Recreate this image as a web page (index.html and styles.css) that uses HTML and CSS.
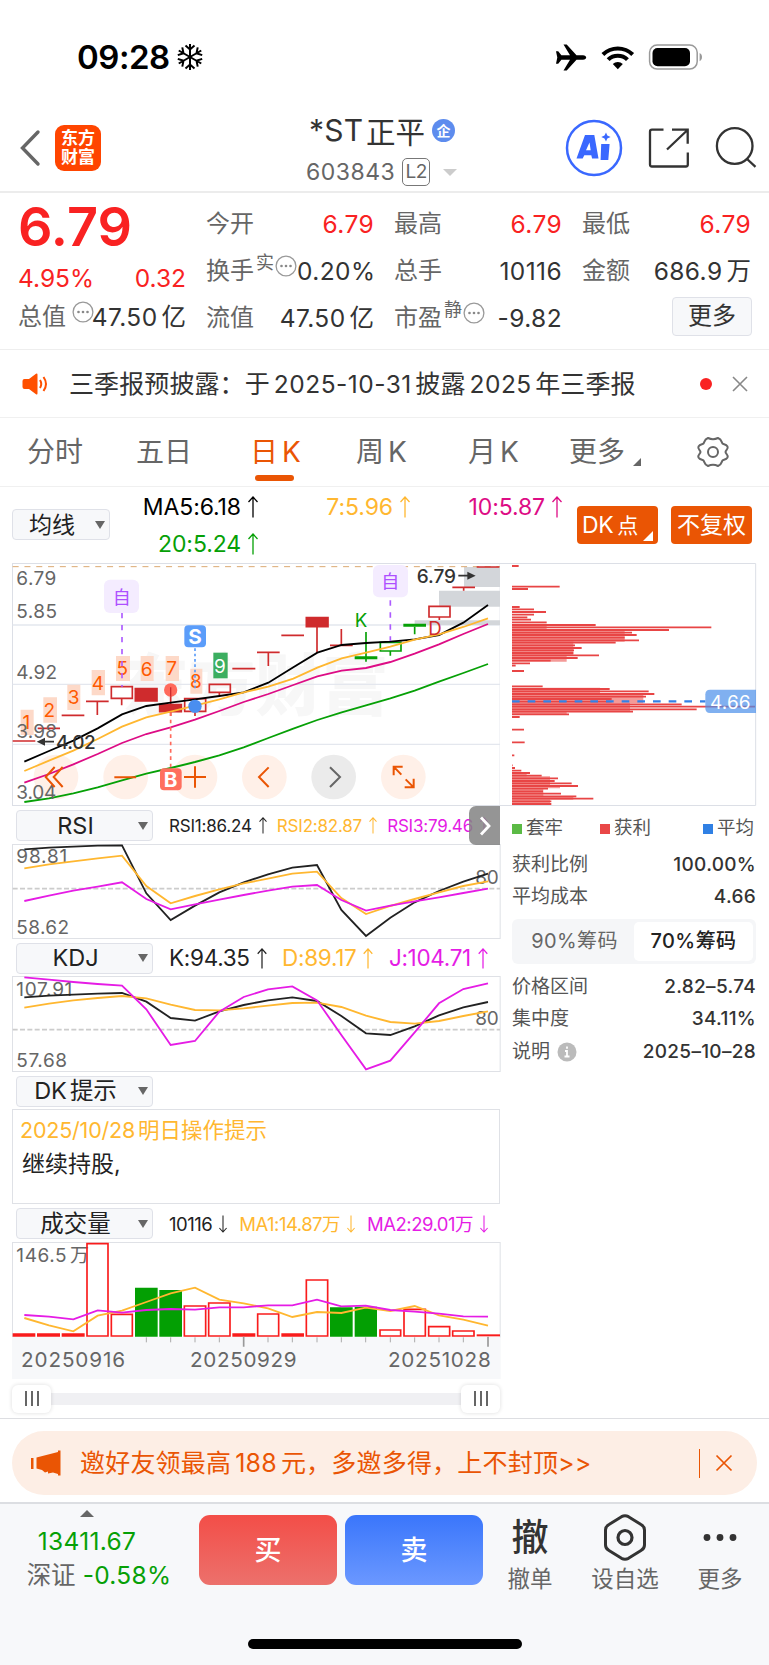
FILE: index.html
```html
<!DOCTYPE html>
<html lang="zh-CN">
<head>
<meta charset="utf-8">
<title>*ST正平 603843</title>
<link rel="stylesheet" href="styles.css">
</head>
<body>
<svg class="defs" width="0" height="0">
  <symbol id="up" viewBox="0 0 10 22"><path d="M5 21.5V1M.5 6 5 1l4.500 5" fill="none" stroke="currentColor" stroke-width="1.3"/></symbol>
  <symbol id="down" viewBox="0 0 10 22"><path d="M5 .5V21M.5 16 5 21l4.500-5" fill="none" stroke="currentColor" stroke-width="1.3"/></symbol>
  <symbol id="more-dots" viewBox="0 0 22 22"><circle cx="11" cy="11" r="9.900" fill="none" stroke="#999" stroke-width="1.300"/><circle cx="6.500" cy="11" r="1.300" fill="#888"/><circle cx="11" cy="11" r="1.300" fill="#888"/><circle cx="15.500" cy="11" r="1.300" fill="#888"/></symbol>
</svg>

<header class="status">
  <div class="status-time">09:28</div>
  <svg class="snow" width="26" height="28" viewBox="-13 -14 26 28"><g fill="none" stroke="#000" stroke-width="2"><path id="arm" d="M0 0V-13M-4.500-11.500 0-7.500 4.500-11.500"/><use href="#arm" transform="rotate(60)"/><use href="#arm" transform="rotate(120)"/><use href="#arm" transform="rotate(180)"/><use href="#arm" transform="rotate(240)"/><use href="#arm" transform="rotate(300)"/></g></svg>
  <svg class="status-icons" width="148" height="30" viewBox="555 42 148 30">
    <path d="M556 51.200h2.200l3.200 4h8.600L563.500 44.500h3.200l9.800 10.700h6.500c2 0 3.200 1.200 3.200 2.300s-1.200 2.300-3.200 2.300h-6.500l-9.800 10.700h-3.200L570 59.800h-8.600l-3.200 4H556l1.300-6.300z"/>
    <path d="M601.500 53a23.500 23.500 0 0 1 32.600 0l-2.800 2.900a19.300 19.300 0 0 0-27 0z"/>
    <path d="M606.700 58.200a16 16 0 0 1 22.200 0l-2.900 2.900a11.800 11.800 0 0 0-16.400 0z"/>
    <path d="M612.800 64a7.400 7.400 0 0 1 10 0l-5 5.200z"/>
    <rect x="649.600" y="45.100" width="47.600" height="24" rx="7.500" fill="none" stroke="#999" stroke-width="1.500"/>
    <rect x="652.500" y="48" width="37.500" height="18.200" rx="5"/>
    <path d="M699.600 53c3.200 1.200 3.200 7 0 8.200z" fill="#999"/>
  </svg>
</header>

<nav class="nav">
  <svg class="back" width="22" height="38" viewBox="0 0 22 38"><path d="M19 3 3.500 19 19 35" fill="none" stroke="#666" stroke-width="3.400" stroke-linecap="round"/></svg>
  <div class="logo"><span>东方</span><span>财富</span></div>
  <div class="title">
    <div class="title-name"><span class="latin">*ST</span><span>正平</span><i class="ent">企</i></div>
    <div class="title-code"><span>603843</span><b>L2</b><i class="tri"></i></div>
  </div>
  <svg class="nav-icons" width="194" height="60" viewBox="564 118 194 60">
    <circle cx="594" cy="148" r="27" fill="none" stroke="#3a68ff" stroke-width="2.500"/>
    <path d="M576.500 158.500h6.200l1.600-3.200h7l.8 3.200h6.400l-4.200-23.500h-9.300zM586 150.200l3.500-7.700 1.200 7.700z" fill="#3a68ff" fill-rule="evenodd"/>
    <path d="M601.200 144h8.400l-1.300 16h-7.700zM606 132.500l1.300 3 3.300 1.500-3.300 1.500-1.300 3-1.500-3-3.200-1.500 3.200-1.500z" fill="#3a68ff"/>
    <path d="M663.500 129.700H652a2 2 0 0 0-2 2V164.500a2 2 0 0 0 2 2h33.800a2 2 0 0 0 2-2V152.500M672 129.700h15.700v14M687 130.500 667 149.500" fill="none" stroke="#333" stroke-width="2.300"/>
    <g fill="none" stroke="#333" stroke-width="2.300"><circle cx="734.700" cy="146" r="17.800"/><path d="M746.500 158.500 755.500 166.800"/></g>
  </svg>
</nav>

<section class="quote">
  <div class="col col-price">
    <div class="price">6.79</div>
    <div class="cell red change"><span>4.95%</span><span>0.32</span></div>
    <div class="cell total"><label>总值</label><svg class="info gapped" width="22" height="22"><use href="#more-dots"/></svg><b>47.50<em>亿</em></b></div>
  </div>
  <div class="col">
    <div class="cell"><label>今开</label><b class="red">6.79</b></div>
    <div class="cell"><label>换手</label><sup>实</sup><svg class="info" width="22" height="22"><use href="#more-dots"/></svg><b>0.20%</b></div>
    <div class="cell"><label>流值</label><b>47.50<em>亿</em></b></div>
  </div>
  <div class="col">
    <div class="cell"><label>最高</label><b class="red">6.79</b></div>
    <div class="cell"><label>总手</label><b>10116</b></div>
    <div class="cell"><label>市盈</label><sup>静</sup><svg class="info" width="22" height="22"><use href="#more-dots"/></svg><b>-9.82</b></div>
  </div>
  <div class="col">
    <div class="cell"><label>最低</label><b class="red">6.79</b></div>
    <div class="cell"><label>金额</label><b>686.9<em>万</em></b></div>
    <div class="cell end"><button class="more">更多</button></div>
  </div>
</section>

<section class="notice">
  <svg width="26" height="22" viewBox="0 0 26 22"><path d="M2.500 6H7L14 .8q1.500-.8 1.500 1v18.400q0 1.800-1.500 1L7 16H2.500Q.5 16 .5 14V8q0-2 2-2z" fill="#ff5000"/><path d="M18 7q2.500 4 0 8M21.500 4q5 7 0 14" fill="none" stroke="#ff5000" stroke-width="2"/></svg>
  <p>三季报预披露：于<span class="n">2025-10-31</span>披露<span class="n">2025</span>年三季报</p>
  <i class="dot"></i>
  <svg width="16" height="16" viewBox="0 0 16 16"><path d="M1 1 15 15M15 1 1 15" stroke="#888" stroke-width="1.600"/></svg>
</section>

<nav class="tabs">
  <a>分时</a><a>五日</a><a class="on">日<span>K</span></a><a>周<span>K</span></a><a>月<span>K</span></a><a class="tab-more">更多</a>
  <svg width="34" height="32" viewBox="-17 -16 34 32"><path d="M-5-14Q0-11.500 5-14C9-12.500 8.500-9.500 9.500-8.500S13-8 14.500-5.500C15.800-3 12.500-2 12.500 0S15.800 3 14.500 5.500C13 8 10.500 7.500 9.500 8.500S9 12.500 5 14Q0 11.500-5 14C-9 12.500-8.500 9.500-9.500 8.500S-13 8-14.500 5.500C-15.800 3-12.500 2-12.500 0S-15.800-3-14.500-5.500C-13-8-10.500-7.500-9.500-8.500S-9-12.500-5-14z" fill="none" stroke="#666" stroke-width="2"/><circle r="5" fill="none" stroke="#666" stroke-width="2"/></svg>
</nav>

<section class="ma">
  <button class="pick pick-ma"><span>均线</span><i></i></button>
  <div class="ma-values">
    <span class="c-black">MA5:6.18<svg width="10" height="22"><use href="#up"/></svg></span>
    <span class="c-orange">7:5.96<svg width="10" height="22"><use href="#up"/></svg></span>
    <span class="c-pink">10:5.87<svg width="10" height="22"><use href="#up"/></svg></span>
    <span class="c-green">20:5.24<svg width="10" height="22"><use href="#up"/></svg></span>
  </div>
  <div class="ma-btn corner">DK<em>点</em></div>
  <div class="ma-btn">不复权</div>
</section>

<main class="board">
  <div class="left">
    <svg class="chart" width="489" height="243" viewBox="36 24 1467 729">
      <rect x="37.500" y="25.500" width="1463" height="726" fill="#fff" stroke="#dcdfe6" stroke-width="3"/>
      <text x="366" y="465" class="mark" textLength="800">东方财富</text>
      <path d="M38 210H1500M38 388H1500M38 568H1500" stroke="#e4e7ee" stroke-width="4"/>
      <path d="M1392 36h108v60h-108zM1317 107h183v48h-183zM1244 196h256v14h-256z" fill="#d3d6da"/>
      <path d="M38 35H1500" stroke="#dba972" stroke-width="3" stroke-dasharray="18 17.400"/>
      <g fill="#fff0e8"><circle cx="168" cy="666" r="67"/><circle cx="377" cy="666" r="67"/><circle cx="585" cy="666" r="67"/><circle cx="793" cy="666" r="67"/><circle cx="1001" cy="666" r="67" fill="#ebebeb"/><circle cx="1210" cy="666" r="67"/></g>
      <g fill="#fdd9c8"><path d="M62 464h39v76H62zM130 427h41v76h-41zM202 389h39v76h-39zM275 345h40v76h-40zM348 303h42v75h-42zM422 303h39v75h-39zM497 303h40v75h-40zM571 341h36v75h-36z"/><path d="M640 293h43v77h-43z" fill="#3cae60"/></g>
      <g class="seq"><text x="79" y="522">1</text><text x="148" y="485">2</text><text x="221" y="447">3</text><text x="294" y="404">4</text><text x="367" y="361">5</text><text x="440" y="363">6</text><text x="515" y="361">7</text><text x="588" y="399">8</text><text x="660" y="353" fill="#fff">9</text></g>
      <g fill="none" stroke="#cf2b2d" stroke-width="5">
        <path d="M38 558H106M113 520H180M185 481H253M258 439H326M292 439V480M365 430V451M512 397V483M585 469V483M658 412V421M697 341H766M771 292H839M805 292V333M844 241H912M951 216V293M990 271H1058M1024 222V271M1318 186V195M1357 97H1425M1391 97V107M1430 36H1498"/>
        <path d="M334 395h63v35h-63zM554 431h63v38h-63zM628 388h63v24h-63zM1287 154h63v32h-63z"/>
        <path d="M406 401h65v37h-65zM479 449h65v21h-65zM919 188h65v27h-65z" fill="#cf2b2d"/>
      </g>
      <g fill="none" stroke="#06a006" stroke-width="5"><path d="M1098 231V320M1171 288V302M1244 215V238M1141 262h62v26h-62z"/><path d="M1064 308H1132M1210 211H1278" stroke-width="9"/></g>
      <g class="lines">
        <polyline stroke="#000" points="73,620 147,588 220,557 293,520 366,478 439,453 512,443 585,433 658,423 731,412 805,383 880,337 952,293 1025,270 1098,264 1171,260 1244,253 1317,240 1390,203 1464,150"/>
        <polyline stroke="#ffb730" points="73,648 147,617 220,587 293,552 366,515 439,487 512,470 585,452 658,433 731,412 805,395 880,371 952,338 1025,310 1098,293 1171,275 1244,254 1317,238 1390,216 1464,190"/>
        <polyline stroke="#dd0c85" points="73,683 147,657 220,628 293,597 366,564 439,537 512,517 585,494 658,468 731,441 805,417 880,390 952,364 1025,347 1098,339 1171,321 1244,296 1317,268 1390,237 1464,207"/>
        <polyline stroke="#06a006" points="73,741 147,730 220,715 293,697 366,676 439,656 512,639 585,621 658,601 731,577 805,549 880,521 952,495 1025,472 1098,451 1171,430 1244,407 1317,380 1390,354 1464,327"/>
      </g>
      <g class="axis"><text x="49" y="90" textLength="120">6.79</text><text x="49" y="189" textLength="122">5.85</text><text x="49" y="371" textLength="122">4.92</text><text x="49" y="549" textLength="122">3.98</text><text x="49" y="732" textLength="120">3.04</text></g>
      <g class="peak"><text x="1250" y="83" textLength="118">6.79</text><text x="168" y="581" textLength="119">4.02</text></g>
      <path d="M1375 62h30M132 560h30" stroke="#333" stroke-width="5"/><path d="M1402 50 1427 62 1402 74zM135 548 110 560 135 572z" fill="#333"/>
      <path d="M366 174V395M1171 136V258" stroke="#ad5cff" stroke-width="5" stroke-dasharray="16 20"/>
      <path d="M585 280V405" stroke="#5b9dfa" stroke-width="5" stroke-dasharray="8 8"/><path d="M512 472V640" stroke="#ff6a5c" stroke-width="5" stroke-dasharray="11 11"/>
      <rect x="312" y="74" width="105" height="100" rx="18" fill="#f4ecff"/><rect x="1119" y="30" width="105" height="97" rx="18" fill="#f4ecff"/>
      <text class="zi" x="365" y="147">自</text><text class="zi" x="1171" y="100">自</text>
      <rect x="553" y="211" width="65" height="66" rx="12" fill="#5b9dfa"/><rect x="480" y="640" width="65" height="66" rx="12" fill="#ff6f5e"/>
      <text class="flag" x="585" y="267">S</text><text class="flag" x="512" y="695">B</text>
      <circle cx="512" cy="405" r="20" fill="#ff6a5c"/><path d="M512 397V425" stroke="#cf2b2d" stroke-width="4"/><circle cx="585" cy="454" r="20" fill="#4a8ef0"/>
      <text class="kd" x="1083" y="215" fill="#06a006">K</text><text class="kd" x="1305" y="241" fill="#cf2b2d">D</text>
      <g fill="none" stroke="#ea5504" stroke-width="6"><path d="M164 636 137 666 164 696M188 636 161 666 188 696M343 667H408M552 666H618M585 634V698M806 637 777 666 806 696M1181 661V635H1208M1181 635 1204 659M1241 671V697H1214M1241 697 1217 673"/><path d="M990 637 1020 666 990 696" stroke="#666"/></g>
    </svg>

    <div class="head"><button class="pick"><span>RSI</span><i></i></button>
      <div class="vals vals-rsi"><span>RSI1:86.24<svg width="8" height="17"><use href="#up"/></svg></span><span class="c-orange">RSI2:82.87<svg width="8" height="17"><use href="#up"/></svg></span><span class="c-mag">RSI3:79.46<svg width="8" height="17"><use href="#up"/></svg></span></div>
      <div class="fold"><svg width="12" height="20" viewBox="0 0 12 20"><path d="M2 1.500 10 10 2 18.500" fill="none" stroke="#fff" stroke-width="2.800"/></svg></div>
    </div>
    <svg class="chart" width="489" height="95" viewBox="36 117 1467 285">
      <rect x="37.500" y="118.500" width="1463" height="282" fill="#fff" stroke="#dfe1e6" stroke-width="3"/>
      <path d="M38 251H1500" stroke="#ccc" stroke-width="5" stroke-dasharray="15 7"/>
      <g class="axis"><text x="49" y="175" textLength="153">98.81</text><text x="49" y="387" textLength="158">58.62</text><text x="1426" y="237" textLength="70">80</text></g>
      <g class="lines">
        <polyline stroke="#222" points="73,133 147,128 220,125 293,122 366,121 439,265 512,345 585,302 658,262 731,232 804,208 877,188 951,180 1024,315 1098,393 1171,338 1244,292 1317,258 1390,230 1464,206"/>
        <polyline stroke="#ffb730" points="73,190 147,178 220,169 293,160 366,152 439,243 512,295 585,273 658,253 731,235 804,221 877,206 951,200 1024,279 1098,327 1171,303 1244,282 1317,262 1390,243 1464,229"/>
        <polyline stroke="#e51ce5" points="73,288 147,272 220,257 293,245 366,232 439,282 512,313 585,298 658,284 731,270 804,257 877,245 951,240 1024,285 1098,317 1171,302 1244,289 1317,277 1390,264 1464,251"/>
      </g>
    </svg>

    <div class="head head-37"><button class="pick"><span>KDJ</span><i></i></button>
      <div class="vals vals-kdj"><span>K:94.35<svg width="10" height="21"><use href="#up"/></svg></span><span class="c-orange">D:89.17<svg width="10" height="21"><use href="#up"/></svg></span><span class="c-mag">J:104.71<svg width="10" height="21"><use href="#up"/></svg></span></div>
    </div>
    <svg class="chart" width="489" height="96" viewBox="36 513 1467 288">
      <rect x="37.500" y="514.500" width="1463" height="285" fill="#fff" stroke="#dfe1e6" stroke-width="3"/>
      <path d="M38 674H1500" stroke="#ccc" stroke-width="5" stroke-dasharray="15 7"/>
      <g class="axis"><text x="49" y="573" textLength="168">107.91</text><text x="49" y="785" textLength="152">57.68</text><text x="1426" y="659" textLength="70">80</text></g>
      <g class="lines">
        <polyline stroke="#222" points="73,577 147,572 220,569 293,566 366,564 439,590 512,639 585,647 658,619 731,600 804,586 877,577 951,588 1024,633 1098,685 1171,690 1244,664 1317,631 1390,607 1464,591"/>
        <polyline stroke="#ffb730" points="73,608 147,596 220,586 293,579 366,573 439,580 512,599 585,615 658,616 731,610 804,602 877,594 951,593 1024,606 1098,632 1171,651 1244,656 1317,648 1390,633 1464,619"/>
        <polyline stroke="#e51ce5" points="73,517 147,524 220,531 293,537 366,542 439,613 512,720 585,708 658,620 731,576 804,553 877,544 951,586 1024,690 1098,793 1171,767 1244,682 1317,595 1390,552 1464,535"/>
      </g>
    </svg>

    <div class="head head-37"><button class="pick"><span>DK<em>提示</em></span><i></i></button></div>
    <div class="tip"><p class="c-orange"><span class="n">2025/10/28</span>明日操作提示</p><p class="tip-text">继续持股,</p></div>

    <div class="head"><button class="pick"><span>成交量</span><i></i></button>
      <div class="vals vals-vol"><span>10116<svg width="8" height="18"><use href="#down"/></svg></span><span class="c-orange">MA1:14.87万<svg width="8" height="18"><use href="#down"/></svg></span><span class="c-mag">MA2:29.01万<svg width="8" height="18"><use href="#down"/></svg></span></div>
    </div>
    <svg class="chart" width="489" height="137" viewBox="36 516 1467 411">
      <rect x="37.500" y="517.500" width="1463" height="285" fill="#fff" stroke="#dfe1e6" stroke-width="3"/>
      <rect x="36" y="801" width="1466" height="126" fill="#f7f8fa"/>
      <g class="axis"><text x="49" y="576" textLength="151">146.5</text><text x="210" y="576" textLength="52">万</text></g>
      <g fill="none" stroke="#f91c1c" stroke-width="5">
        <path d="M261 521h63v277h-63zM334 733h63v65h-63zM553 708h64v90h-64zM626 699h64v99h-64zM773 732h63v66h-63zM919 630h64v168h-64zM1140 780h62v18h-62zM1212 718h64v80h-64zM1286 770h63v28h-63zM1358 783h64v15h-64z"/>
        <path d="M38 795H106M111 795H180M185 795H254M697 795H766M844 795H912" stroke-width="11"/><path d="M1430 796H1500" stroke-width="6"/>
      </g>
      <path d="M405 653h68v147h-68zM478 660h68v140h-68zM990 712h68v88h-68zM1064 710h67v90h-67z" fill="#039f03"/>
      <path d="M439 802v15M512 802v15M585 802v15M658 802v15M804 802v15M877 802v15M951 802v15M1024 802v15M1097 802v15M1171 802v15M1244 802v15M1317 802v15M1390 802v15" stroke="#aaa" stroke-width="3"/>
      <path d="M731 800v30M1464 800v30" stroke="#999" stroke-width="5"/>
      <g class="lines">
        <polyline stroke="#ffb730" points="73,744 147,766 220,784 293,737 366,722 439,696 512,670 585,653 658,689 731,700 804,715 877,741 951,726 1024,729 1097,713 1171,723 1244,708 1317,736 1390,749 1464,767"/>
        <polyline stroke="#e51ce5" points="73,735 147,740 220,748 293,721 366,728 439,720 512,717 585,719 658,712 731,712 804,706 877,706 951,689 1024,709 1097,707 1171,720 1244,725 1317,731 1390,739 1464,740"/>
      </g>
      <g class="dates"><text x="63" y="892" textLength="312">20250916</text><text x="570" y="892" textLength="320">20250929</text><text x="1164" y="892" textLength="308">20251028</text></g>
    </svg>
    <div class="slider"><i class="grip"><u></u><u></u><u></u></i><i class="grip"><u></u><u></u><u></u></i></div>
  </div>

  <aside class="right">
    <svg class="chart" width="257" height="243" viewBox="0 24 771 729">
      <path d="M0 25.500H767V751.500H0" fill="#fff" stroke="#dcdfe6" stroke-width="3"/>
      <path d="M36 206H140V226H374V260H220V300H200V320H36zM36 398H300V420H430V445H390V470H200V480H36zM36 652H80V664H150V690H180V700H130V724H220V734H150V750H36z" fill="#f49a98"/>
      <path d="M36 33H56M36 95H179M36 102H84M36 156H59M36 163H102M36 171H138M36 179H102M36 187H82M36 194H93M36 202H140M36 210H287M36 217H634M36 225H507M36 233H396M36 240H410M36 248H374M36 256H417M36 263H347M36 271H225M36 279H245M36 286H222M36 294H220M36 301H297M36 309H233M36 317H152M36 325H90M36 332H47M36 348H72M36 394H128M36 402H329M36 409H446M36 417H463M36 425H438M36 432H335M36 440H335M36 448H545M36 455H765M36 463H590M36 470H399M36 478H207M36 486H59M36 524H72M36 562H74M36 601H43M36 631H38M36 639H45M36 647H64M36 654H90M36 662H125M36 670H174M36 678H164M36 685H215M36 693H234M36 701H144M36 709H129M36 716H183M36 724H229M36 731H280M36 739H154M36 747H154" stroke="#e84545" stroke-width="5.600"/>
      <path d="M36 439H616" stroke="#3380e6" stroke-width="7" stroke-dasharray="23 24"/>
      <path d="M630 404H768V474H630Q616 474 616 460V418Q616 404 630 404z" fill="#4a8fea" fill-opacity=".7"/>
      <text x="630" y="461" class="avg" textLength="122">4.66</text>
    </svg>
    <div class="legend"><span class="lg">套牢</span><span class="lr">获利</span><span class="lb">平均</span></div>
    <dl><dt>获利比例</dt><dd>100.00%</dd></dl>
    <dl><dt>平均成本</dt><dd>4.66</dd></dl>
    <div class="switch"><span>90%筹码</span><span class="sel">70%筹码</span></div>
    <dl><dt>价格区间</dt><dd>2.82–5.74</dd></dl>
    <dl><dt>集中度</dt><dd>34.11%</dd></dl>
    <dl class="last"><dt>说明 <svg width="20" height="20" viewBox="0 0 20 20"><circle cx="10" cy="10" r="9.500" fill="#bbb"/><path d="M10 4.500v2.200M8 9h2v5.500M7.500 14.500h5" stroke="#fff" stroke-width="1.800" fill="none"/></svg></dt><dd>2025–10–28</dd></dl>
  </aside>
</main>

<section class="invite">
  <div class="pill">
    <svg width="30" height="26" viewBox="0 0 30 26"><path d="M0 8h2.500v11H0zM5.500 7.500 27 2V.5h2.500V25.500H27V24l-5-1.500-5 1V21.500l-3 1-3-2.500-5.500-1.500z" fill="#ea5504"/></svg>
    <p>邀好友领最高<span class="n">188</span>元，多邀多得，上不封顶&gt;&gt;</p>
    <i></i>
    <svg width="18" height="18" viewBox="0 0 18 18"><path d="M1.500 1.500 16.500 16.500M16.500 1.500 1.500 16.500" stroke="#ea5504" stroke-width="1.700"/></svg>
  </div>
</section>

<footer class="bottom">
  <div class="row">
    <div class="index"><i></i><div class="c-green">13411.67</div><div><span>深证</span><b class="c-green">-0.58%</b></div></div>
    <button class="trade buy">买</button>
    <button class="trade sell">卖</button>
    <div class="act act-1"><strong>撤</strong><span>撤单</span></div>
    <div class="act act-2"><svg width="44" height="47" viewBox="-22 -23.500 44 47"><path d="M-3.500-20.800q3.500-1.800 7 0L16-13q3.500 2 3.500 5.500V7.500Q19.500 11 16 13L3.500 20.800q-3.500 1.800-7 0L-16 13q-3.500-2-3.500-5.500V-7.500q0-3.500 3.500-5.500z" fill="none" stroke="#333" stroke-width="3"/><circle r="7" fill="none" stroke="#333" stroke-width="3.200"/></svg><span>设自选</span></div>
    <div class="act act-3"><svg width="44" height="47" viewBox="-22 -23.500 44 47"><g fill="#333"><circle cx="-13" r="3.400"/><circle r="3.400"/><circle cx="13" r="3.400"/></g></svg><span>更多</span></div>
  </div>
  <div class="home"></div>
</footer>
</body>
</html>
```
FILE: styles.css
```css
* { box-sizing: border-box; margin: 0; padding: 0; }
body { width: 769px; height: 1665px; overflow: hidden; background: #fff; color: #333; font-family: Inter, "Noto Sans CJK SC", sans-serif; display: flex; flex-direction: column; }
i, em { font-style: normal; }
b { font-weight: 400; }
svg { display: block; flex: none; }
.defs { position: absolute; }
button { font: inherit; color: inherit; background: #f7f8fa; border: 1.500px solid #dfe1e8; border-radius: 4px; }
.red { color: #f92222 !important; }
.c-black { color: #000; }
.c-orange { color: #ffb730; }
.c-pink { color: #dd0c85; }
.c-green { color: #06a006; }
.c-mag { color: #e51ce5; }

.status { height: 108px; display: flex; align-items: center; padding: 6px 66px 0 77px; flex: none; }
.status-time { font-size: 33px; font-weight: 600; color: #000; width: 100px; letter-spacing: -.5px; }
.status-icons { margin-left: auto; }

.nav { height: 85px; border-bottom: 2px solid #ececec; display: flex; align-items: center; padding: 0 11px 3px 19px; flex: none; position: relative; }
.logo { width: 46px; height: 46px; margin-left: 14px; border-radius: 9px; background: #ff4500; color: #fff; font-weight: 700; font-size: 17px; line-height: 19px; padding-top: 4px; text-align: center; }
.logo span { display: block; }
.title { margin-left: 205px; width: 160px; height: 80px; padding-top: 1px; }
.title-name { display: flex; align-items: center; height: 42px; font-size: 29.500px; padding-left: 3px; white-space: nowrap; }
.title-name .latin { width: 57px; font-size: 30px; letter-spacing: .2px; }
.ent { width: 23px; height: 23px; margin-left: 7px; border-radius: 50%; background: #5d8cee; color: #fff; font-size: 14px; font-weight: 700; line-height: 23px; text-align: center; flex: none; }
.title-code { display: flex; align-items: center; height: 34px; margin-top: 4px; font-size: 23px; color: #666; letter-spacing: .5px; }
.title-code b { margin-left: 7px; width: 28px; height: 28px; border: 1.500px solid #777; border-radius: 5px; font-size: 19px; line-height: 26px; text-align: center; letter-spacing: -.5px; }
.tri { border: 7px solid transparent; border-top-color: #ccc; border-bottom: 0; margin-left: 13px; }
.nav-icons { margin-left: auto; }

.quote { height: 157px; border-bottom: 1px solid #eee; display: grid; grid-template-columns: 168px 168px 168px 169px; column-gap: 20px; padding-left: 18px; font-size: 24px; flex: none; }
.col { padding-top: 7px; }
.col-price { padding-top: 0; }
.price { height: 66px; line-height: 67px; font-size: 54px; font-weight: 600; color: #f92222; }
.cell { height: 47px; display: flex; align-items: center; white-space: nowrap; line-height: 30px; }
.cell label { color: #666; }
.cell b { margin-left: auto; display: flex; gap: 4px; font-size: 24.500px; letter-spacing: .4px; }
.cell b em { letter-spacing: 0; }
.cell sup { font-size: 18px; line-height: 18px; color: #666; margin-bottom: 16px; margin-left: 2px; }
.info { margin-bottom: 10px; margin-left: 1px; }
.info.gapped { margin-left: 6px; margin-right: -3px; }
.change { height: 37px; justify-content: space-between; font-size: 24.500px; }
.total { height: 41px; }
.end { justify-content: flex-end; }
.more { width: 80px; height: 39px; margin-top: -3px; margin-right: -1px; }

.notice { height: 68px; border-bottom: 1px solid #f0f0f0; display: flex; align-items: center; padding: 0 21px 0 22px; flex: none; }
.notice p { margin-left: 21px; width: 630px; font-size: 25px; line-height: 34px; white-space: nowrap; letter-spacing: .1px; }
.notice .n { font-size: 24.500px; letter-spacing: .5px; margin: 0 3.500px 0 4px; }
.dot { width: 12px; height: 12px; border-radius: 50%; background: #f92222; margin: 0 20px 0 auto; }

.tabs { height: 69px; border-bottom: 1px solid #f0f0f0; display: grid; grid-template-columns: 109px 112px 108px 112px 101px 127px 36px; align-items: center; padding-left: 27px; font-size: 28px; line-height: 40px; color: #666; flex: none; white-space: nowrap; }
.tabs a { position: relative; }
.tabs a span { margin-left: 4px; }
.tabs .on { color: #ea5504; margin-left: 2px; }
.on::after { content: ""; position: absolute; left: 5px; bottom: -9px; width: 39px; height: 6px; border-radius: 3px; background: #ea5504; }
.tab-more::after { content: ""; position: absolute; left: 64px; bottom: 6px; border: 4px solid #666; border-top-color: transparent; border-left-color: transparent; }

.ma { height: 76px; display: flex; padding-left: 12px; flex: none; }
.pick { width: 137px; height: 31px; display: flex; align-items: center; flex: none; font-size: 23.500px; line-height: 28px; color: #222; }
.pick span { flex: 1; text-align: center; white-space: nowrap; padding-right: 4px; }
.pick em { margin-left: 3px; }
.pick i { border: 5px solid transparent; border-top: 8px solid #666; border-bottom: 0; margin-right: 4px; }
.pick-ma { width: 98px; margin-top: 22px; font-size: 23px; }
.ma-values { width: 454px; display: grid; grid-template-columns: 148px 152px 152px; grid-auto-rows: 37px; padding-top: 1px; font-size: 23px; line-height: 36px; }
.ma-values span { display: flex; align-items: center; justify-content: flex-end; gap: 7px; letter-spacing: -.1px; }
.ma-btn { width: 81px; height: 38px; margin: 19px 0 0 13px; border-radius: 4px; background: #ea5504; color: #fff; font-size: 23px; line-height: 38px; text-align: center; white-space: nowrap; position: relative; }
.corner { text-align: left; padding-left: 5px; letter-spacing: -.4px; }
.corner em { font-size: 21px; margin-left: 4px; }
.corner::after { content: ""; position: absolute; right: 5px; bottom: 3px; border: 5.500px solid #fff; border-top-color: transparent; border-left-color: transparent; }

.board { height: 856px; display: flex; padding-left: 12px; border-bottom: 1px solid #dddee2; flex: none; }
.left { width: 489px; }
.right { width: 257px; padding-right: 1px; margin-left: -1px; }
.chart text { font-family: Inter, "Noto Sans CJK SC", sans-serif; }
.lines { fill: none; stroke-width: 5.500px; }
.axis { font-size: 57px; fill: #666; }
.dates { font-size: 62px; fill: #666; }
.seq { font-size: 57px; fill: #ff5a00; text-anchor: middle; }
.peak { font-size: 57px; fill: #333; font-weight: 500; }
.mark { font-size: 200px; font-weight: 900; fill: #f7f7f7; }
.zi { font-size: 54px; fill: #ad50ff; text-anchor: middle; }
.flag { font-size: 62px; font-weight: 700; fill: #fff; text-anchor: middle; }
.kd { font-size: 56px; text-anchor: middle; }
.avg { font-size: 57px; fill: #fff; }

.head { height: 38px; display: flex; align-items: center; padding: 1px 13px 0 4px; position: relative; }
.head-37 { height: 37px; }
.vals { flex: 1; margin-left: 16px; display: flex; justify-content: space-between; white-space: nowrap; color: #222; }
.vals span { display: flex; align-items: center; gap: 7px; line-height: 28px; }
.vals .c-orange { color: #ffb730; }
.vals .c-mag { color: #e51ce5; }
.vals-rsi { font-size: 17px; letter-spacing: -.2px; }
.vals-kdj { font-size: 22.500px; letter-spacing: -.3px; }
.vals-vol { font-size: 18.500px; letter-spacing: -.5px; }
.fold { position: absolute; right: 1px; top: 0; width: 31px; height: 39px; background: rgba(130,130,130,.85); border-radius: 7px 0 0 7px; display: flex; align-items: center; justify-content: center; }
.tip { width: 488px; height: 95px; border: 1px solid #dfe1e6; padding: 3px 0 0 7px; font-size: 21.500px; line-height: 34px; }
.tip .n { margin-right: 3px; letter-spacing: -.2px; }
.tip-text { font-size: 23px; padding-left: 2px; color: #222; }
.slider { height: 39px; display: flex; align-items: center; justify-content: space-between; background: linear-gradient(#f0f0f3, #f0f0f3) center / 100% 12px no-repeat; width: 488px; }
.grip { width: 39px; height: 28px; border-radius: 6px; background: #fff; box-shadow: 0 0 4px rgba(0,0,0,.14); display: flex; align-items: center; justify-content: center; gap: 4px; }
.grip u { width: 2px; height: 15px; background: #666; }

.legend { height: 43px; padding-bottom: 4px; display: grid; grid-template-columns: 88px 103px 60px; align-items: center; padding-left: 12px; font-size: 18.500px; color: #555; }
.legend span::before { content: ""; display: inline-block; width: 10px; height: 10px; margin-right: 4px; background: #5bba45; }
.legend .lr::before { background: #e94747; }
.legend .lb::before { background: #3080e4; }
.right dl { height: 32px; padding-left: 12px; display: flex; align-items: center; justify-content: space-between; font-size: 19px; line-height: 28px; }
.right dt { color: #555; display: flex; align-items: center; gap: 7px; }
.right dd { font-size: 19px; font-weight: 500; color: #333; letter-spacing: .3px; }
.switch { margin: 6px 0 7px 12px; height: 45px; padding: 3px; border-radius: 6px; background: #f5f6f8; display: grid; grid-template-columns: 1fr 1fr; text-align: center; font-size: 20px; line-height: 39px; color: #666; letter-spacing: .4px; }
.sel { background: #fff; border-radius: 5px; font-weight: 500; color: #222; }
.right .last { height: 33px; }

.invite { height: 85px; border-bottom: 2px solid #dcdee2; padding: 12px 12px 0; flex: none; }
.pill { height: 64px; border-radius: 32px; background: #fdeee5; display: flex; align-items: center; padding: 0 24px 0 19px; color: #ea5504; }
.pill p { margin-left: 19px; font-size: 25px; line-height: 40px; white-space: nowrap; letter-spacing: .2px; }
.pill .n { margin: 0 4px; }
.pill i { width: 1.500px; height: 29px; background: #ea5504; margin: 0 15px 0 auto; }

.bottom { height: 161px; background: #f7f8fa; flex: none; display: flex; flex-direction: column; align-items: center; }
.row { height: 134px; width: 769px; display: flex; }
.index { width: 199px; padding: 6px 25px 0 0; font-size: 24.500px; line-height: 36px; text-align: center; white-space: nowrap; display: flex; flex-direction: column; }
.index i { border: 7px solid transparent; border-bottom-color: #666; border-top: 0; align-self: center; }
.index .c-green:nth-child(2) { margin-top: 6px; margin-bottom: -2px; letter-spacing: .3px; }
.index div span { color: #666; }
.index div b { margin-left: 7px; }
.index > div:last-child { padding-left: 24px; }
.trade { width: 138px; height: 70px; margin: 11px 8px 0 0; padding-bottom: 3px; border: 0; border-radius: 11px; color: #fff; font-size: 27px; font-weight: 500; flex: none; }
.buy { background: linear-gradient(#f34e48, #ec716c); }
.sell { background: linear-gradient(#3a76fb, #6b98ff); }
.act { display: flex; flex-direction: column; align-items: center; padding-top: 10px; font-size: 22.500px; line-height: 35px; color: #666; white-space: nowrap; }
.act strong { font-size: 37px; font-weight: 500; color: #333; height: 47px; line-height: 47px; }
.act-1 { width: 78px; }
.act-2 { width: 112px; }
.act-3 { width: 78px; }
.home { width: 274px; height: 10px; border-radius: 5px; background: #000; margin-top: 1px; }
```
